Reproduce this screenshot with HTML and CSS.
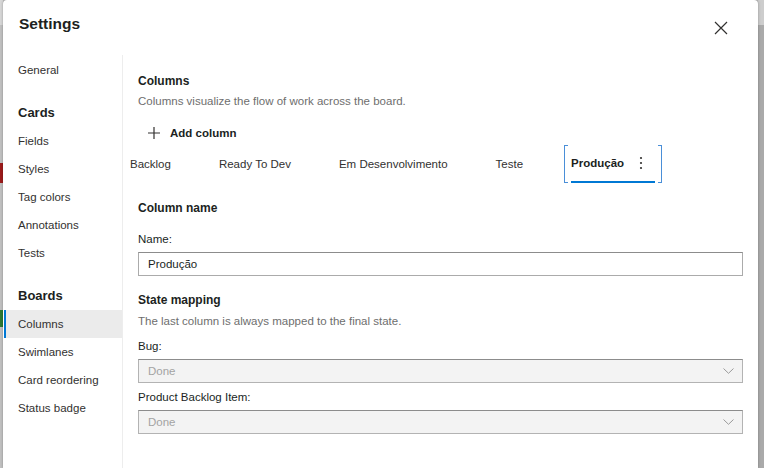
FILE: index.html
```html
<!DOCTYPE html>
<html lang="en">
<head>
<meta charset="utf-8">
<title>Settings</title>
<link rel="stylesheet" href="styles.css">
</head>
<body>
<div class="screen">
  <div class="strip-left">
    <div class="sl-top"></div>
    <div class="sl-gap1"></div>
    <div class="sl-red"></div>
    <div class="sl-gap2"></div>
    <div class="sl-green"></div>
  </div>
  <div class="modal">
    <div class="modal-header">
      <h1 class="modal-title">Settings</h1>
      <button class="close-btn" aria-label="Close">
        <svg width="14" height="14" viewBox="0 0 14 14"><path d="M1 1L13 13M13 1L1 13" stroke="#323130" stroke-width="1.2" fill="none"/></svg>
      </button>
    </div>
    <div class="modal-body">
      <nav class="sidebar">
        <div class="nav-item">General</div>
        <div class="nav-group">
          <div class="nav-heading">Cards</div>
          <div class="nav-item">Fields</div>
          <div class="nav-item">Styles</div>
          <div class="nav-item">Tag colors</div>
          <div class="nav-item">Annotations</div>
          <div class="nav-item">Tests</div>
        </div>
        <div class="nav-group">
          <div class="nav-heading">Boards</div>
          <div class="nav-item selected">Columns</div>
          <div class="nav-item">Swimlanes</div>
          <div class="nav-item">Card reordering</div>
          <div class="nav-item">Status badge</div>
        </div>
      </nav>
      <main class="content">
        <div class="section-title">Columns</div>
        <div class="section-desc">Columns visualize the flow of work across the board.</div>
        <div class="add-btn">
          <svg width="12" height="12" viewBox="0 0 12 12"><path d="M6 0V12M0 6H12" stroke="#323130" stroke-width="1.2" fill="none"/></svg>
          <span>Add column</span>
        </div>
        <div class="tabs">
          <div class="tab">Backlog</div>
          <div class="tab">Ready To Dev</div>
          <div class="tab">Em Desenvolvimento</div>
          <div class="tab">Teste</div>
          <div class="tab active">
            <div class="tab-inner">
              <span>Produção</span>
              <span class="kebab">
                <svg width="4" height="14" viewBox="0 0 4 14"><circle cx="2" cy="2" r="1.1" fill="#323130"/><circle cx="2" cy="7" r="1.1" fill="#323130"/><circle cx="2" cy="12" r="1.1" fill="#323130"/></svg>
              </span>
            </div>
          </div>
        </div>

        <div class="section-title title-colname">Column name</div>
        <div class="field-label label-name">Name:</div>
        <div class="text-input">Produção</div>

        <div class="section-title title-state">State mapping</div>
        <div class="section-desc desc-state">The last column is always mapped to the final state.</div>
        <div class="field-label label-bug">Bug:</div>
        <div class="select-box">
          <span>Done</span>
          <svg width="11" height="6" viewBox="0 0 11 6"><path d="M0.5 0.5L5.5 5.3L10.5 0.5" stroke="#9a9a9a" stroke-width="1" fill="none"/></svg>
        </div>
        <div class="field-label label-pbi">Product Backlog Item:</div>
        <div class="select-box">
          <span>Done</span>
          <svg width="11" height="6" viewBox="0 0 11 6"><path d="M0.5 0.5L5.5 5.3L10.5 0.5" stroke="#9a9a9a" stroke-width="1" fill="none"/></svg>
        </div>
      </main>
    </div>
  </div>
  <div class="strip-right">
    <div class="sr-top"></div>
  </div>
</div>
</body>
</html>
```
FILE: styles.css
```css
html, body {
  margin: 0;
  padding: 0;
}
body {
  font-family: "Liberation Sans", Arial, sans-serif;
  color: #201f1e;
  background: #bcbcbc;
}
.screen {
  display: flex;
  width: 764px;
  height: 468px;
  overflow: hidden;
}
.strip-left {
  width: 3px;
  display: flex;
  flex-direction: column;
  background: #c2c2c2;
}
.sl-top { height: 25px; background: #d8d8d8; }
.sl-gap1 { height: 138px; }
.sl-red { height: 20px; background: #9e1b1b; }
.sl-gap2 { height: 127px; }
.sl-green { height: 17px; background: #2e7a32; }

.modal {
  width: 755px;
  background: #fff;
  border-radius: 4px 4px 0 0;
  box-shadow: 0 0 3px rgba(0, 0, 0, 0.3);
  display: flex;
  flex-direction: column;
  position: relative;
  z-index: 1;
}
.strip-right {
  width: 6px;
  background: #aaaaaa;
}
.sr-top { height: 25px; background: #cdcdcd; }

.modal-header {
  height: 55px;
  display: flex;
  justify-content: space-between;
  align-items: flex-start;
  padding: 0 21px 0 16px;
}
.modal-title {
  margin: 14px 0 0 0;
  font-size: 15.5px;
  line-height: 20px;
  font-weight: bold;
}
.close-btn {
  margin-top: 12px;
  width: 32px;
  height: 32px;
  border: none;
  background: none;
  padding: 0;
  display: flex;
  align-items: center;
  justify-content: center;
}

.modal-body {
  flex: 1;
  display: flex;
  min-height: 0;
}
.sidebar {
  width: 119px;
  border-right: 1px solid #ededed;
  padding-top: 1px;
}
.nav-item {
  height: 28px;
  line-height: 28px;
  padding-left: 15px;
  font-size: 11.5px;
  color: #323130;
}
.nav-item.selected {
  margin-left: 1px;
  border-left: 2px solid #0078d4;
  padding-left: 12px;
  background: #ebebeb;
}
.nav-group { margin-top: 14px; }
.nav-heading {
  height: 29px;
  line-height: 29px;
  padding-left: 15px;
  font-size: 13px;
  font-weight: bold;
  color: #201f1e;
}

.content {
  flex: 1;
  padding: 18px 15px 0 15px;
}
.section-title {
  font-size: 12px;
  line-height: 16px;
  font-weight: bold;
}
.section-desc {
  font-size: 11.5px;
  line-height: 16px;
  color: #6e6e6e;
  margin-top: 4px;
}
.add-btn {
  display: flex;
  align-items: center;
  gap: 10px;
  height: 24px;
  margin-top: 12px;
  padding-left: 10px;
  font-size: 11.5px;
  font-weight: bold;
}
.tabs {
  display: flex;
  align-items: center;
  height: 38px;
  margin-left: -15px;
  gap: 34px;
}
.tab {
  padding: 0 7px;
  font-size: 11.5px;
  line-height: 38px;
  color: #323130;
  white-space: nowrap;
}
.tab.active {
  position: relative;
  padding: 0 7px 0 7px;
  height: 38px;
  font-weight: bold;
  color: #201f1e;
}
.tab.active::before {
  content: "";
  position: absolute;
  inset: 0;
  border-left: 1px solid #4a8fd8;
  border-right: 1px solid #4a8fd8;
  background:
    linear-gradient(#4a8fd8, #4a8fd8) left top / 3px 1px no-repeat,
    linear-gradient(#4a8fd8, #4a8fd8) right top / 3px 1px no-repeat,
    linear-gradient(#4a8fd8, #4a8fd8) left bottom / 3px 1px no-repeat,
    linear-gradient(#4a8fd8, #4a8fd8) right bottom / 3px 1px no-repeat;
}
.tab-inner {
  display: flex;
  align-items: center;
  height: 36px;
  line-height: 36px;
  border-bottom: 2px solid #0078d4;
  padding-right: 3px;
}
.kebab {
  width: 22px;
  margin-left: 6px;
  display: flex;
  justify-content: center;
  align-items: center;
}

.title-colname { margin-top: 17px; }
.field-label {
  font-size: 11.5px;
  line-height: 16px;
  color: #201f1e;
}
.label-name { margin-top: 15px; }
.text-input {
  margin-top: 5px;
  height: 24px;
  box-sizing: border-box;
  border: 1px solid #ababab;
  border-top-color: #8c8c8c;
  padding: 0 9px;
  display: flex;
  align-items: center;
  font-size: 11.5px;
  color: #201f1e;
}
.title-state { margin-top: 16px; }
.desc-state { margin-top: 5px; }
.label-bug { margin-top: 9px; }
.label-pbi { margin-top: 6px; }
.select-box {
  margin-top: 5px;
  height: 24px;
  box-sizing: border-box;
  border: 1px solid #b3b3b3;
  border-top-color: #8c8c8c;
  background: #f3f3f3;
  padding: 0 8px 0 9px;
  display: flex;
  align-items: center;
  justify-content: space-between;
  font-size: 11.5px;
  color: #a3a3a3;
}
```
